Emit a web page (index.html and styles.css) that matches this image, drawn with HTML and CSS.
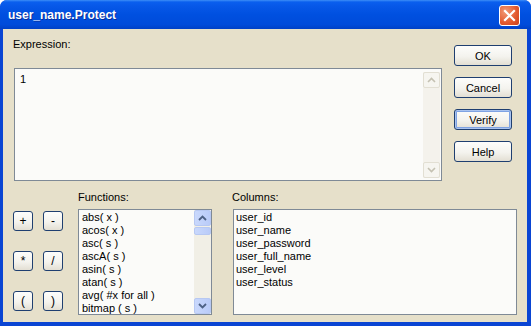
FILE: index.html
```html
<!DOCTYPE html>
<html>
<head>
    <title>user_name.Protect</title>
    <link rel="stylesheet" href="styles.css">
</head>
<body>
    <div class="window">
        <div class="titlebar">
            <span class="title">user_name.Protect</span>
            <span class="close">
                <svg width="13" height="13" viewBox="0 0 13 13">
                    <path d="M2 2 L11 11 M11 2 L2 11" stroke="#fff" stroke-width="2.2" stroke-linecap="square"/>
                </svg>
            </span>
        </div>

        <div class="frame">
            <div class="top">
                <div class="expr">
                    <div class="label">Expression:</div>
                    <div class="editbox">
                        <div class="edittext">1</div>
                        <div class="scroll off">
                            <div class="arrow">
                                <svg width="9" height="6" viewBox="0 0 9 6"><path d="M1 5 L4.5 1.5 L8 5" fill="none" stroke="#c4c1b2" stroke-width="1.6"/></svg>
                            </div>
                            <div class="track"></div>
                            <div class="arrow">
                                <svg width="9" height="6" viewBox="0 0 9 6"><path d="M1 1 L4.5 4.5 L8 1" fill="none" stroke="#c4c1b2" stroke-width="1.6"/></svg>
                            </div>
                        </div>
                    </div>
                </div>
                <div class="actions">
                    <div class="btn">OK</div>
                    <div class="btn">Cancel</div>
                    <div class="btn default">Verify</div>
                    <div class="btn">Help</div>
                </div>
            </div>

            <div class="bottom">
                <div class="ops">
                    <div class="btn op">+</div>
                    <div class="btn op">-</div>
                    <div class="btn op">*</div>
                    <div class="btn op">/</div>
                    <div class="btn op">(</div>
                    <div class="btn op">)</div>
                </div>

                <div class="funcs">
                    <div class="label">Functions:</div>
                    <div class="list">
                        <div class="items">
                            <div>abs( x )</div>
                            <div>acos( x )</div>
                            <div>asc( s )</div>
                            <div>ascA( s )</div>
                            <div>asin( s )</div>
                            <div>atan( s )</div>
                            <div>avg( #x for all )</div>
                            <div>bitmap ( s )</div>
                        </div>
                        <div class="scroll">
                            <div class="arrow">
                                <svg width="9" height="6" viewBox="0 0 9 6"><path d="M1 5 L4.5 1.5 L8 5" fill="none" stroke="#4d6185" stroke-width="1.8"/></svg>
                            </div>
                            <div class="thumb"></div>
                            <div class="track"></div>
                            <div class="arrow">
                                <svg width="9" height="6" viewBox="0 0 9 6"><path d="M1 1 L4.5 4.5 L8 1" fill="none" stroke="#4d6185" stroke-width="1.8"/></svg>
                            </div>
                        </div>
                    </div>
                </div>

                <div class="cols">
                    <div class="label">Columns:</div>
                    <div class="list wide">
                        <div class="items">
                            <div>user_id</div>
                            <div>user_name</div>
                            <div>user_password</div>
                            <div>user_full_name</div>
                            <div>user_level</div>
                            <div>user_status</div>
                        </div>
                    </div>
                </div>
            </div>
        </div>
    </div>
</body>
</html>
```

FILE: styles.css
```css
body { margin: 0; background: #fff; font-family: "Liberation Sans", Arial, sans-serif; font-size: 11px; color: #000; }

.window { width: 531px; height: 326px; display: flex; flex-direction: column; background: #0a45d3; border-radius: 7px 7px 0 0; }

.titlebar { height: 29px; flex: none; display: flex; align-items: center; justify-content: space-between; padding: 0 11px 0 8px; border-radius: 7px 7px 0 0;
    background: linear-gradient(#3d8ef7 0, #0a5fee 2px, #0758e8 6px, #0050e0 50%, #004bda 85%, #0040c6 100%); }
.title { color: #fff; font-weight: bold; font-size: 12px; text-shadow: 1px 1px 0 #0b2f9a; }
.close { width: 21px; height: 21px; box-sizing: border-box; margin-top: 2px; border: 1px solid #fff; border-radius: 3px; display: flex; align-items: center; justify-content: center;
    background: radial-gradient(circle at 30% 30%, #f29a77, #e2582d 60%, #c9401c); }

.frame { flex: 1; margin: 0 4px 4px 3px; background: #e6e0ca; padding: 9px 0 0 10px; }

.label { height: 13px; line-height: 13px; }

.top { display: flex; }
.expr { width: 429px; }
.editbox { margin: 17px 0 0 1px; width: 428px; height: 113px; box-sizing: border-box; border: 1px solid #7f8a96; background: #fbfbf9; display: flex; }
.edittext { flex: 1; padding: 4px 5px; line-height: 13px; }

.actions { margin: 7px 0 0 12px; display: flex; flex-direction: column; gap: 11px; }

.btn { width: 58px; height: 21px; box-sizing: border-box; border: 1px solid #1f3f70; border-radius: 3px; display: flex; align-items: center; justify-content: center;
    background: linear-gradient(#fdfdfb, #f4f3ee 55%, #e3dfd3); }
.btn.default { box-shadow: inset 0 0 0 1px #a9c3ef, inset 0 0 0 2px #7fa3e3; }

.bottom { display: flex; margin-top: 10px; }
.ops { margin-top: 20px; display: grid; grid-template-columns: 20px 20px; grid-auto-rows: 20px; column-gap: 10px; row-gap: 20px; align-self: flex-start; }
.btn.op { width: 20px; height: 20px; font-size: 12px; }

.funcs { margin-left: 15px; }
.cols { margin-left: 20px; }
.list { margin-top: 5px; width: 134px; height: 106px; box-sizing: border-box; border: 1px solid #7f8a96; background: #fbfbf9; display: flex; overflow: hidden; }
.list.wide { width: 284px; margin-left: 1px; }
.items { flex: 1; padding: 1px 0 0 3px; line-height: 13px; white-space: nowrap; overflow: hidden; }
.list.wide .items { padding-left: 2px; }

.scroll { width: 17px; flex: none; display: flex; flex-direction: column; background: #f1efe6; }
.scroll .arrow { height: 16px; box-sizing: border-box; border: 1px solid #b7c8f2; border-radius: 2px; display: flex; align-items: center; justify-content: center;
    background: linear-gradient(90deg, #c9d8fc, #b9cbf8); }
.scroll .thumb { height: 8px; margin-top: 1px; box-sizing: border-box; border: 1px solid #b7c8f2; border-radius: 2px; background: linear-gradient(90deg, #c9d8fc, #b9cbf8); }
.scroll .track { flex: 1; }

.scroll.off { margin: 3px 1px 2px 0; background: #f4f2ec; }
.scroll.off .arrow { border-color: #e2dfd3; background: #f6f5f0; }
```
